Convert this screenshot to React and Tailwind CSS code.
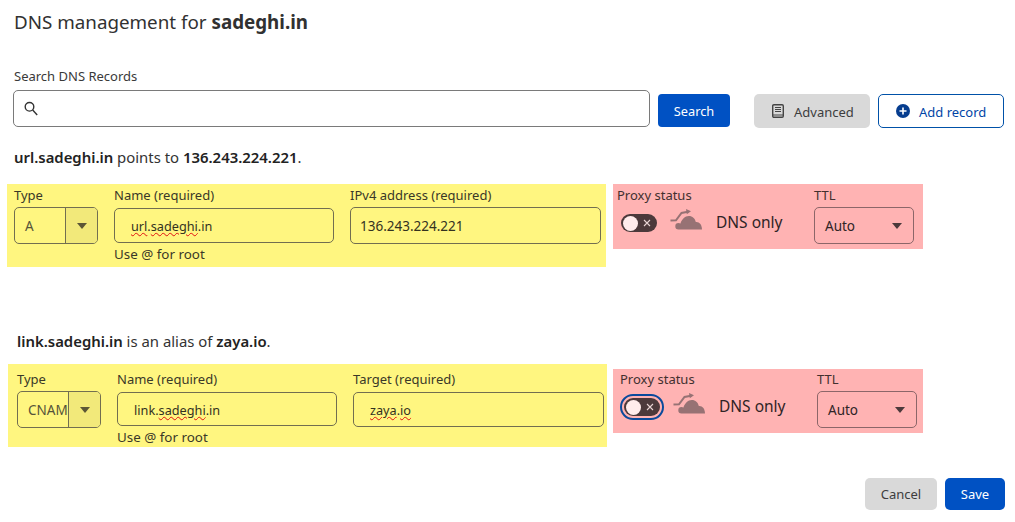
const font = "font-['Noto_Sans','Open_Sans',sans-serif]";

function Arrow() {
  return (
    <svg width="12" height="8" viewBox="0 0 12 8">
      <path d="M1 1h10L6 7z" fill="#5b5636" />
    </svg>
  );
}

function Cloud() {
  return (
    <svg width="32" height="21" viewBox="0 0 32 21" className="shrink-0">
      <path d="M8.500 20.500a3.200 3.200 0 0 1 0-6.400c.8 0 1.400.2 2 .5C11.500 10.500 15 7 18.800 7c3.700 0 6.200 2.400 7 6 3.500-.4 6.200 2.500 6.200 7.500z" fill="#977274" />
      <path d="M0.500 11.500l5.500-.2L11.500 4l6.500-1.300" fill="none" stroke="#977274" strokeWidth="2" />
      <path d="M16 0l5 2.300-4.200 3z" fill="#977274" />
    </svg>
  );
}

function Toggle({ focused }) {
  return (
    <div className={`mt-[7px] flex h-[18px] w-[36px] shrink-0 items-center rounded-full bg-[#4c393b] ${focused ? "outline-2 outline-offset-[2px] outline-[#0a4a9c]" : ""}`}>
      <span className="ml-[2px] h-[15px] w-[15px] rounded-full bg-[#ffecec]" />
      <svg width="8" height="8" viewBox="0 0 8 8" className="ml-[5px]">
        <path d="M1 1l6 6M7 1l-6 6" stroke="#e8d4d4" strokeWidth="1.100" />
      </svg>
    </div>
  );
}

const Squiggle = ({ children }) => (
  <span className="underline decoration-wavy decoration-[#e01010] decoration-1 underline-offset-1">{children}</span>
);

function Field({ label, width, children, hint, tall }) {
  return (
    <div className={`flex flex-col ${width}`}>
      <div className="h-[23px] text-[13px] leading-[23px] text-[#3a3828]">{label}</div>
      <div className={`flex items-center rounded-[5px] border border-[#726e50] text-[#34321f] ${tall ? "h-[37px] pt-[2px] text-[13.500px]" : "mt-px h-[35px] pt-[3px] text-[12.700px]"}`}>
        {children}
      </div>
      {hint && <div className="mt-[2px] text-[13.400px] leading-[19px] text-[#3a3828]">{hint}</div>}
    </div>
  );
}

function TypeSelect({ value }) {
  return (
    <div className="flex w-[84px] flex-col">
      <div className="h-[23px] text-[13px] leading-[23px] text-[#3a3828]">Type</div>
      <div className="flex h-[37px] overflow-hidden rounded-[5px] border border-[#726e50] text-[13.500px] text-[#55533a]">
        <div className="flex w-[50px] items-center overflow-hidden whitespace-nowrap pl-[10px] pt-[2px]">{value}</div>
        <div className="flex flex-1 items-center justify-center border-l border-[#726e50] bg-[#f2e97a]">
          <Arrow />
        </div>
      </div>
    </div>
  );
}

function Proxy({ focused, pad }) {
  return (
    <div className={`flex h-[65px] w-[310px] ${pad}`}>
      <div className="flex w-[197px] flex-col">
        <div className="h-[23px] text-[13px] leading-[23px] text-[#42302f]">Proxy status</div>
        <div className="flex h-[37px] items-start pl-[4px]">
          <Toggle focused={focused} />
          <div className="ml-[13px] mt-[2px] flex"><Cloud /></div>
          <span className="ml-[14px] mt-[4px] text-[15.500px] leading-[22px] text-[#2f2426]">DNS only</span>
        </div>
      </div>
      <div className="flex w-[100px] flex-col">
        <div className="h-[23px] text-[13px] leading-[23px] text-[#42302f]">TTL</div>
        <div className="flex h-[37px] items-center justify-between rounded-[5px] border border-[#8c6669] px-[10px] text-[13.500px] text-[#2f2426]">
          <span className="pt-[2px]">Auto</span>
          <svg width="12" height="8" viewBox="0 0 12 8"><path d="M1 1h10L6 7z" fill="#4c393b" /></svg>
        </div>
      </div>
    </div>
  );
}

export default function App() {
  return (
    <div className={`${font} flex h-[522px] w-[1015px] flex-col overflow-hidden bg-white text-[#313131]`}>
      <h1 className="ml-[14px] mt-[9px] h-[26px] text-[18.800px] leading-[26px]">
        DNS management for <b className="font-bold">sadeghi.in</b>
      </h1>

      <div className="ml-[14px] mt-[31px] h-[20px] text-[13px] leading-[20px] text-[#3a3a3a]">Search DNS Records</div>

      <div className="ml-[13px] mt-[4px] flex h-[38px] items-start">
        <div className="flex h-[37px] w-[637px] items-center rounded-[5px] border border-[#7a7a7a] pl-[10px]">
          <svg width="14" height="15" viewBox="0 0 14 15" fill="none" stroke="#333" strokeWidth="1.400">
            <circle cx="5.500" cy="5.800" r="4.300" />
            <path d="M8.700 9l4.500 5" />
          </svg>
        </div>
        <button className="ml-[8px] mt-[4px] h-[33px] w-[72px] rounded-[4px] bg-[#0051c3] pt-[2px] text-[12.800px] text-white">Search</button>
        <button className="ml-[24px] mt-[4px] flex h-[34px] w-[116px] items-center rounded-[5px] bg-[#d9d9d9] pl-[18px] text-[13px] text-[#3d3d3d]">
          <svg width="12" height="14" viewBox="0 0 12 14" fill="none" className="shrink-0">
            <rect x=".700" y=".700" width="10.600" height="12.600" rx="1.200" stroke="#444" strokeWidth="1.400" />
            <path d="M3 3.500h6M3 5.500h6M3 7.500h6M1 11h10" stroke="#444" strokeWidth="1" />
          </svg>
          <span className="ml-[10px] pt-[3px]">Advanced</span>
        </button>
        <button className="ml-[8px] mt-[4px] flex h-[34px] w-[126px] items-center rounded-[5px] border border-[#0051a8] bg-white pl-[17px] text-[13px] text-[#0045a6]">
          <svg width="14" height="14" viewBox="0 0 14 14" className="shrink-0">
            <circle cx="7" cy="7" r="7" fill="#063d8f" />
            <path d="M7 3.500v7M3.500 7h7" stroke="#fff" strokeWidth="1.600" />
          </svg>
          <span className="ml-[9px] pt-[3px]">Add record</span>
        </button>
      </div>

      <p className="ml-[14px] mt-[19px] h-[22px] text-[14.900px] leading-[20px] text-[#333]">
        <b className="font-semibold text-[#222]">url.sadeghi.in</b> points to <b className="font-semibold text-[#222]">136.243.224.221</b>.
      </p>

      <div className="ml-[7px] mt-[15px] flex items-start gap-[7px]">
        <div className="flex h-[83px] w-[599px] gap-[16px] bg-[#fff680] pl-[7px]">
          <TypeSelect value="A" />
          <Field label="Name (required)" width="w-[220px]" hint="Use @ for root">
            <span className="pl-[16px]"><Squiggle>url</Squiggle>.<Squiggle>sadeghi</Squiggle>.in</span>
          </Field>
          <Field tall label="IPv4 address (required)" width="w-[251px]">
            <span className="pl-[9px]">136.243.224.221</span>
          </Field>
        </div>
        <div className="bg-[#ffb3b3]">
          <Proxy pad="pl-[4px]" />
        </div>
      </div>

      <p className="ml-[17px] mt-[64px] h-[22px] text-[14.900px] leading-[20px] text-[#333]">
        <b className="font-semibold text-[#222]">link.sadeghi.in</b> is an alias of <b className="font-semibold text-[#222]">zaya.io</b>.
      </p>

      <div className="ml-[8px] mt-[11px] flex items-start gap-[6px]">
        <div className="flex h-[83px] w-[599px] gap-[16px] bg-[#fff680] pl-[9px] pt-[4px]">
          <TypeSelect value="CNAME" />
          <Field label="Name (required)" width="w-[220px]" hint="Use @ for root">
            <span className="pl-[16px]">link.<Squiggle>sadeghi</Squiggle>.in</span>
          </Field>
          <Field label="Target (required)" width="w-[251px]">
            <span className="pl-[16px]"><Squiggle>zaya</Squiggle>.<Squiggle>io</Squiggle></span>
          </Field>
        </div>
        <div className="mt-[5px] bg-[#ffb3b3]">
          <Proxy focused pad="-mt-px pl-[7px]" />
        </div>
      </div>

      <div className="ml-[865px] mt-[31px] flex gap-[8px]">
        <button className="h-[32px] w-[72px] rounded-[5px] bg-[#d9d9d9] pt-[2px] text-[13px] text-[#3d3d3d]">Cancel</button>
        <button className="h-[32px] w-[60px] rounded-[5px] bg-[#0051c3] pt-[2px] text-[13px] text-white">Save</button>
      </div>
    </div>
  );
}
